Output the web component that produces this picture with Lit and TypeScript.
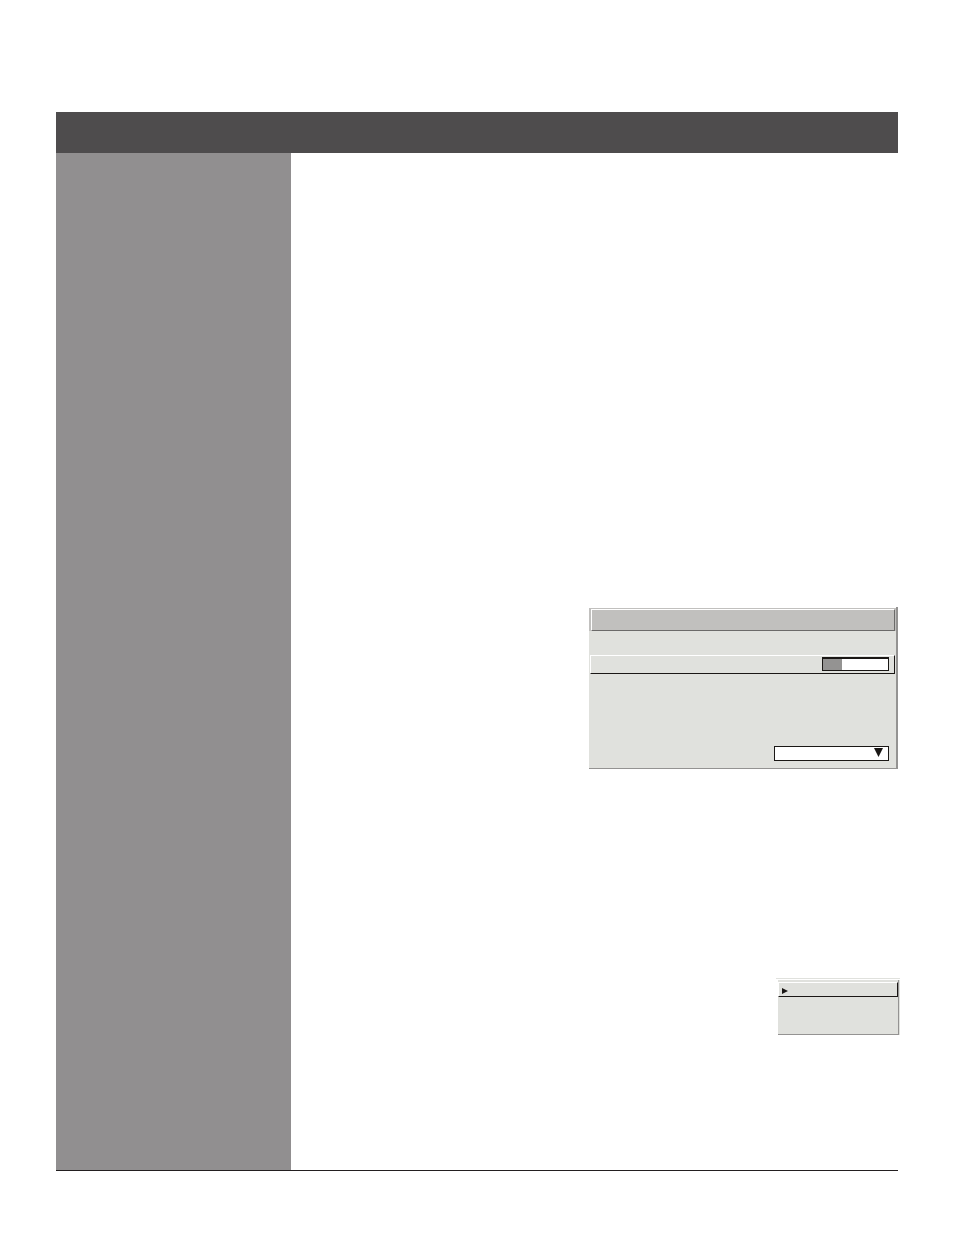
import { LitElement, html, css } from "lit";
import { customElement, property } from "lit/decorators.js";

@customElement("settings-panel")
class SettingsPanel extends LitElement {
  @property({ type: Number }) level = 29;

  static styles = css`
    :host {
      display: block;
      width: 309px;
      box-sizing: border-box;
      padding-top: 1px;
      border-right: 2px solid #949392;
    }
    .panel {
      background: #e0e1dd;
      border-bottom: 1px solid #949392;
    }
    .title {
      padding: 1px 1px 0 2px;
      background: #c1c0be;
    }
    .title-face {
      height: 20px;
      border-style: solid;
      border-width: 1px;
      border-color: #fff #6b6a69 #6b6a69 #fff;
    }
    .body {
      display: flex;
      flex-direction: column;
      gap: 72px;
      padding: 24px 1px 7px;
    }
    .row {
      display: flex;
      justify-content: flex-end;
      align-items: center;
      padding-right: 6px;
    }
    .selected {
      padding: 1px 5px 2px 0;
      border-style: solid;
      border-width: 1px;
      border-color: #fff #1a1715 #1a1715 #fff;
    }
    .gauge {
      appearance: none;
      box-sizing: border-box;
      width: 67px;
      height: 14px;
      margin: 0;
      border: 1px solid #1a1715;
      border-top-width: 2px;
      border-radius: 0;
    }
    .gauge::-webkit-slider-thumb {
      appearance: none;
      width: 1px;
      height: 1px;
      opacity: 0;
    }
    .choice {
      display: grid;
      width: 115px;
    }
    .choice > * {
      grid-area: 1 / 1;
    }
    select {
      appearance: none;
      box-sizing: border-box;
      width: 100%;
      height: 15px;
      margin: 0;
      padding: 0;
      border: 1px solid #1a1715;
      border-radius: 0;
      background: #fff;
      font: 10px/12px "Liberation Sans", sans-serif;
    }
    .arrow {
      justify-self: end;
      align-self: start;
      margin: 2px 6px 0 0;
      pointer-events: none;
    }
  `;

  render() {
    const fill = `background: linear-gradient(to right, #949392 ${this.level}%, #fff ${this.level}%)`;
    return html`
      <section class="panel">
        <div class="title"><div class="title-face"></div></div>
        <div class="body">
          <div class="row selected">
            <input class="gauge" type="range" min="0" max="100" .value=${String(this.level)} aria-label="Level" style=${fill} />
          </div>
          <div class="row">
            <div class="choice">
              <select aria-label="Option"><option></option></select>
              <svg class="arrow" width="9" height="9" viewBox="0 0 9 9" aria-hidden="true">
                <path d="M0 0H9L4.5 9Z" fill="#1a1715" />
              </svg>
            </div>
          </div>
        </div>
      </section>
    `;
  }
}

@customElement("popup-menu")
class PopupMenu extends LitElement {
  static styles = css`
    :host {
      display: block;
      width: 124px;
    }
    .edge {
      height: 1px;
      margin-bottom: 1px;
      background: #e0e1dd;
    }
    .menu {
      margin-left: 2px;
      padding: 2px 0 37px;
      background: #e0e1dd;
      border-right: 1px solid #949392;
      border-bottom: 1px solid #949392;
      box-shadow: 1px 0 #e0e1dd;
      margin-right: 1px;
    }
    .item {
      display: flex;
      align-items: center;
      box-sizing: border-box;
      width: 100%;
      height: 15px;
      padding: 2px 0 0 3px;
      border-style: solid;
      border-width: 1px;
      border-color: #fff #1a1715 #1a1715 #fff;
      border-radius: 0;
      background: #e0e1dd;
    }
  `;

  render() {
    return html`
      <div class="edge"></div>
      <div class="menu">
        <button class="item" aria-label="Selected item">
          <svg width="6" height="6" viewBox="0 0 6 6" aria-hidden="true">
            <path d="M0 0L6 3L0 6Z" fill="#1a1715" />
          </svg>
        </button>
      </div>
    `;
  }
}

@customElement("app-root")
class AppRoot extends LitElement {
  static styles = css`
    :host {
      display: flex;
      flex-direction: column;
      box-sizing: border-box;
      min-height: 100vh;
      padding: 112px 56px 64px;
      background: #fff;
    }
    header {
      height: 41px;
      background: #4e4c4d;
    }
    .columns {
      flex: 1;
      display: grid;
      grid-template-columns: 235px 1fr;
      border-bottom: 1px solid #231f20;
    }
    aside {
      background: #918f90;
    }
    main {
      display: flex;
      flex-direction: column;
      align-items: flex-end;
      gap: 209px;
      padding-top: 454px;
    }
    popup-menu {
      margin-right: -2px;
    }
  `;

  render() {
    return html`
      <header></header>
      <div class="columns">
        <aside></aside>
        <main>
          <settings-panel></settings-panel>
          <popup-menu></popup-menu>
        </main>
      </div>
    `;
  }
}
